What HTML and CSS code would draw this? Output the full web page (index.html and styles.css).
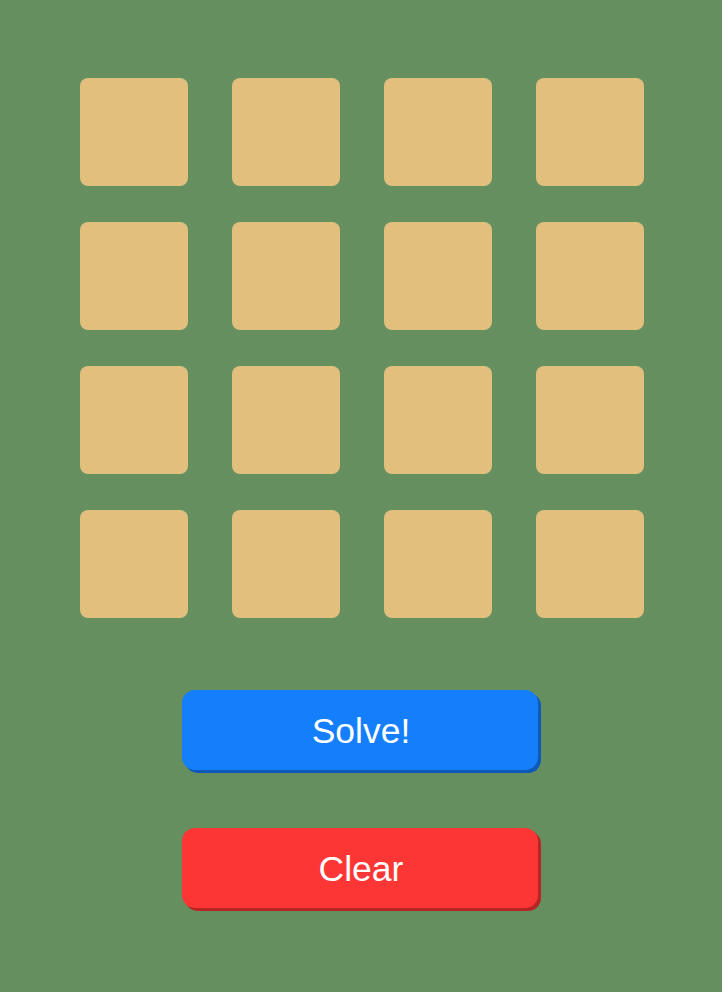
FILE: index.html
```html
<!DOCTYPE html>
<html>
<head>
<meta charset="utf-8">
<link rel="stylesheet" href="styles.css">
</head>
<body>
<main class="app">
  <div class="board">
    <div class="tile"></div><div class="tile"></div><div class="tile"></div><div class="tile"></div>
    <div class="tile"></div><div class="tile"></div><div class="tile"></div><div class="tile"></div>
    <div class="tile"></div><div class="tile"></div><div class="tile"></div><div class="tile"></div>
    <div class="tile"></div><div class="tile"></div><div class="tile"></div><div class="tile"></div>
  </div>
  <div class="actions">
    <button class="btn btn-solve">Solve!</button>
    <button class="btn btn-clear">Clear</button>
  </div>
</main>
</body>
</html>
```
FILE: styles.css
```css
html, body {
  margin: 0;
  padding: 0;
  background: #658f5f;
  height: 100%;
}
.app {
  display: flex;
  flex-direction: column;
  align-items: center;
  padding-top: 78px;
  padding-left: 1px;
  font-family: "Liberation Sans", Arial, sans-serif;
}
.board {
  display: grid;
  grid-template-columns: repeat(4, 108px);
  grid-auto-rows: 108px;
  column-gap: 44px;
  row-gap: 36px;
}
.tile {
  background: #e3bf7d;
  border-radius: 8px;
}
.actions {
  display: flex;
  flex-direction: column;
  align-items: center;
  gap: 58px;
  margin-top: 72px;
  margin-right: 3px;
}
.btn {
  width: 356px;
  height: 80px;
  border: none;
  border-radius: 13px;
  color: #fff;
  font-family: "Liberation Sans", Arial, sans-serif;
  font-size: 35.5px;
  padding: 3px 0 0 2px;
  cursor: pointer;
}
.btn-solve {
  background: #147efb;
  box-shadow: 3px 3px 0 #0f59b8;
}
.btn-clear {
  background: #fc3635;
  box-shadow: 3px 3px 0 #b82525;
}
```
